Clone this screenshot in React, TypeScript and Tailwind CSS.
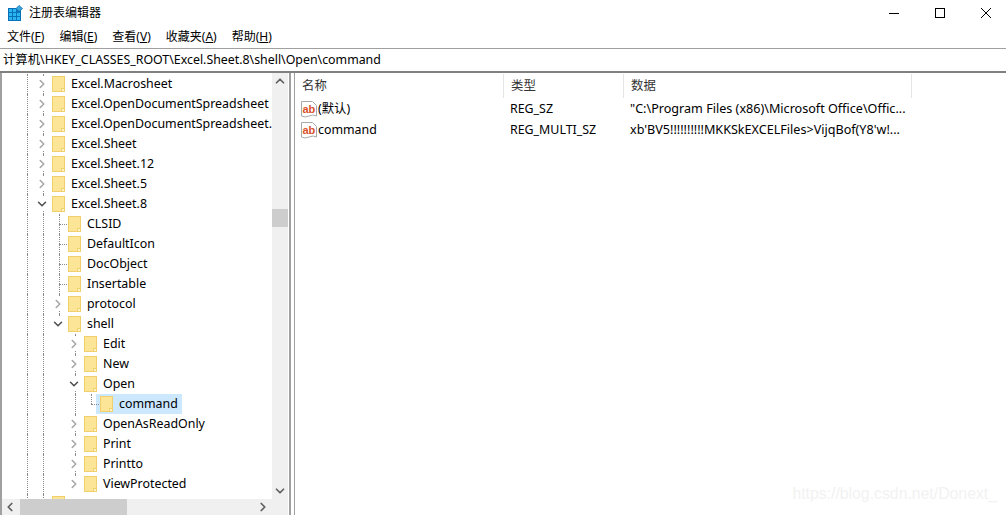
import React from 'react';
import { ChevronDown, ChevronLeft, ChevronRight, ChevronUp } from 'lucide-react';

const FONT = '"Noto Sans", "Noto Sans CJK SC", sans-serif';

type Node = {
  name: string;
  guides: boolean[]; // vertical dotted lines left of the node, one per level
  kind: 'closed' | 'open' | 'leaf';
  last?: boolean;
  selected?: boolean;
};

const rows: Node[] = [
  { name: 'Excel.Macrosheet', guides: [true], kind: 'closed' },
  { name: 'Excel.OpenDocumentSpreadsheet', guides: [true], kind: 'closed' },
  { name: 'Excel.OpenDocumentSpreadsheet.', guides: [true], kind: 'closed' },
  { name: 'Excel.Sheet', guides: [true], kind: 'closed' },
  { name: 'Excel.Sheet.12', guides: [true], kind: 'closed' },
  { name: 'Excel.Sheet.5', guides: [true], kind: 'closed' },
  { name: 'Excel.Sheet.8', guides: [true], kind: 'open' },
  { name: 'CLSID', guides: [true, true], kind: 'leaf' },
  { name: 'DefaultIcon', guides: [true, true], kind: 'leaf' },
  { name: 'DocObject', guides: [true, true], kind: 'leaf' },
  { name: 'Insertable', guides: [true, true], kind: 'leaf' },
  { name: 'protocol', guides: [true, true], kind: 'closed' },
  { name: 'shell', guides: [true, true], kind: 'open', last: true },
  { name: 'Edit', guides: [true, true, false], kind: 'closed' },
  { name: 'New', guides: [true, true, false], kind: 'closed' },
  { name: 'Open', guides: [true, true, false], kind: 'open' },
  { name: 'command', guides: [true, true, false, true], kind: 'leaf', last: true, selected: true },
  { name: 'OpenAsReadOnly', guides: [true, true, false], kind: 'closed' },
  { name: 'Print', guides: [true, true, false], kind: 'closed' },
  { name: 'Printto', guides: [true, true, false], kind: 'closed' },
  { name: 'ViewProtected', guides: [true, true, false], kind: 'closed', last: true },
  { name: '', guides: [true], kind: 'leaf' },
];

const values = [
  { name: '(默认)', type: 'REG_SZ', data: '"C:\\Program Files (x86)\\Microsoft Office\\Offic...' },
  { name: 'command', type: 'REG_MULTI_SZ', data: "xb'BV5!!!!!!!!!!MKKSkEXCELFiles>VijqBof(Y8'w!..." },
];

const menus = [
  ['文件(', 'F', ')'],
  ['编辑(', 'E', ')'],
  ['查看(', 'V', ')'],
  ['收藏夹(', 'A', ')'],
  ['帮助(', 'H', ')'],
];

const AppIcon = () => (
  <svg width="15" height="16" viewBox="0 0 15 16" className="shrink-0">
    <rect x="0" y="3" width="13" height="13" fill="#0a70b8" />
    {[4, 8, 12].map((y) =>
      [1, 5, 9].map((x) => <rect key={`${x}-${y}`} x={x} y={y} width="3" height="3" fill={y === 4 && x === 9 ? '#0a70b8' : '#29b6f0'} />)
    )}
    <path d="M11 0.5 L14.5 3.5 L11 6.5 L8 3.5 Z" fill="#3ba7dc" stroke="#1273b5" strokeWidth="0.8" />
  </svg>
);

const Folder = () => (
  <svg width="13" height="16" viewBox="0 0 13 16" className="shrink-0">
    <rect x="0.5" y="0.5" width="12" height="15" fill="#fce596" stroke="#f0cf6c" />
    <rect x="9" y="12" width="4" height="4" fill="#f3d26e" />
    <rect x="10" y="13" width="2" height="2" fill="#fff4c8" />
  </svg>
);

const AbIcon = () => (
  <svg width="16" height="17" viewBox="0 0 16 17" className="shrink-0">
    <path d="M0.5 0.5 H11.5 L15.5 4.5 V15 Q12 13 8 15 Q4 17 0.5 15 Z" fill="#fff" stroke="#a8a8a8" />
    <text x="1.5" y="11.5" fontSize="11" fontWeight="700" fill="#d9502a" fontFamily='"Liberation Sans", sans-serif'>
      ab
    </text>
  </svg>
);

const TreeRow = ({ node }: { node: Node }) => (
  <div className="flex h-5 shrink-0 items-center pl-[25px]">
    {node.guides.map((on, i) => (
      <span
        key={i}
        className={`h-full shrink-0 ${i === node.guides.length - 1 ? 'w-2' : 'w-4'} ${on ? 'border-l border-dotted border-[#8a8a8a]' : ''}`}
      />
    ))}
    <span className="relative h-full w-4 shrink-0">
      <span className={`absolute left-2 top-0 border-l border-dotted border-[#8a8a8a] ${node.last ? 'h-1/2' : 'h-full'}`} />
      {node.kind === 'leaf' && <span className="absolute left-2 top-[10px] w-2 border-t border-dotted border-[#8a8a8a]" />}
      {node.kind === 'closed' && (
        <span className="absolute left-0 top-[3px] bg-white">
          <ChevronRight size={14} strokeWidth={2.6} color="#a6a6a6" />
        </span>
      )}
      {node.kind === 'open' && (
        <span className="absolute left-0 top-[3px] bg-white">
          <ChevronDown size={14} strokeWidth={2.6} color="#505050" />
        </span>
      )}
    </span>
    {node.selected ? (
      <div className="-ml-[3px] flex h-full items-center bg-[#cce8ff] pl-1 pr-1">
        <Folder />
        <span className="whitespace-nowrap pl-[6px]">{node.name}</span>
      </div>
    ) : (
      <div className="ml-px flex h-full items-center">
        <Folder />
        {node.name && <span className="whitespace-nowrap pl-[6px]">{node.name}</span>}
      </div>
    )}
  </div>
);

const ColumnHead = ({ label, width }: { label: string; width: string }) => (
  <div className={`flex h-[24px] shrink-0 items-center border-r border-[#e5e5e5] pl-[7px] text-[#333] ${width}`}>{label}</div>
);

export default function App() {
  return (
    <div className="relative flex h-screen w-full flex-col overflow-hidden bg-white text-[12.4px] text-black" style={{ fontFamily: FONT }}>
      {/* Title bar */}
      <header className="flex h-[26px] shrink-0 items-center pl-2">
        <AppIcon />
        <span className="pl-[6px] text-[12px]">注册表编辑器</span>
        <div className="ml-auto -mr-[3px] flex h-full">
          <button className="flex w-[46px] items-center justify-center" aria-label="最小化">
            <svg width="10" height="10" viewBox="0 0 10 10"><path d="M0 5.5 H10" stroke="#000" /></svg>
          </button>
          <button className="flex w-[46px] items-center justify-center" aria-label="最大化">
            <svg width="10" height="10" viewBox="0 0 10 10"><rect x="0.5" y="0.5" width="9" height="9" fill="none" stroke="#000" /></svg>
          </button>
          <button className="flex w-[46px] items-center justify-center" aria-label="关闭">
            <svg width="10" height="10" viewBox="0 0 10 10"><path d="M0 0 L10 10 M10 0 L0 10" stroke="#000" /></svg>
          </button>
        </div>
      </header>

      {/* Menu */}
      <nav className="flex h-[22px] shrink-0 items-center gap-[15px] pl-[7px] text-[12px]">
        {menus.map(([before, key, after]) => (
          <span key={key} className="whitespace-nowrap">
            {before}
            <span className="underline">{key}</span>
            {after}
          </span>
        ))}
      </nav>

      {/* Address bar */}
      <div className="flex h-[25px] shrink-0 items-center border-t border-b-2 border-t-[#a0a0a0] border-b-[#808080] pl-[3px] text-[12.37px]">
        计算机\HKEY_CLASSES_ROOT\Excel.Sheet.8\shell\Open\command
      </div>

      <div className="flex min-h-0 flex-1">
        {/* Key tree */}
        <div className="flex w-[291px] shrink-0 flex-col border-l-2 border-r-2 border-[#a0a0a0] pr-px">
          <div className="flex min-h-0 flex-1">
            <div className="flex min-w-0 flex-1 flex-col overflow-hidden pt-px">
              {rows.map((node, i) => (
                <TreeRow key={i} node={node} />
              ))}
            </div>
            <div className="flex w-4 shrink-0 flex-col items-center bg-[#f0f0f0] text-[#606060]">
              <ChevronUp size={14} strokeWidth={3} className="mt-px" />
              <div className="mt-[121px] h-[18px] w-full bg-[#cdcdcd]" />
              <ChevronDown size={14} strokeWidth={3} className="mb-px mt-auto" />
            </div>
          </div>
          <div className="flex h-4 shrink-0 items-center bg-[#f0f0f0] text-[#606060]">
            <ChevronLeft size={14} strokeWidth={3} className="ml-px" />
            <div className="ml-[3px] h-full w-[107px] bg-[#cdcdcd]" />
            <ChevronRight size={14} strokeWidth={3} className="ml-auto mr-[18px]" />
          </div>
        </div>

        {/* Splitter */}
        <div className="w-[3px] shrink-0" />

        {/* Values */}
        <main className="min-w-0 flex-1 border-l border-[#a0a0a0] pt-px">
          <div className="flex">
            <ColumnHead label="名称" width="w-[209px]" />
            <ColumnHead label="类型" width="w-[120px]" />
            <ColumnHead label="数据" width="w-[288px]" />
          </div>
          <div className="pt-px">
            {values.map((v) => (
              <div key={v.name} className="flex h-[21px] items-center">
                <div className="flex w-[209px] shrink-0 items-center gap-px pl-[6px]">
                  <AbIcon />
                  <span>{v.name}</span>
                </div>
                <div className="w-[120px] shrink-0 pl-[6px]">{v.type}</div>
                <div className="whitespace-nowrap pl-[6px] text-[12.6px]">{v.data}</div>
              </div>
            ))}
          </div>
        </main>
      </div>

      {/* Blog watermark */}
      <div
        className="absolute bottom-[9px] right-[9px] text-[15.8px] text-[#f2f2f2]"
        style={{ fontFamily: '"Liberation Sans", sans-serif' }}
      >
        https://blog.csdn.net/Donext_
      </div>
    </div>
  );
}
